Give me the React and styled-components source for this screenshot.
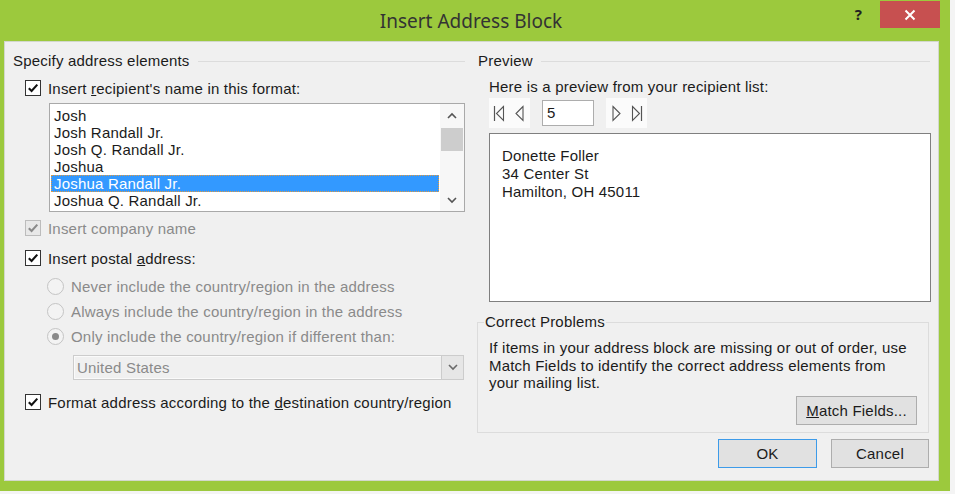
import React from "react";
import styled, { createGlobalStyle } from "styled-components";

const GlobalStyle = createGlobalStyle`
  html, body {
    margin: 0;
    padding: 0;
    background: #f4f4f4;
  }
  body {
    font-family: "Liberation Sans", Arial, sans-serif;
    font-size: 15px;
    letter-spacing: 0.2px;
    color: #1b1b1b;
  }
  * { box-sizing: border-box; }
`;

const names = [
  "Josh",
  "Josh Randall Jr.",
  "Josh Q. Randall Jr.",
  "Joshua",
  "Joshua Randall Jr.",
  "Joshua Q. Randall Jr.",
];

function CheckMark({ color }) {
  return (
    <svg width="12" height="12" viewBox="0 0 12 12">
      <path d="M1.8 6.2 L4.6 9 L10.3 2.6" fill="none" stroke={color} strokeWidth="2.1" />
    </svg>
  );
}

function Chevron({ up, color = "#555" }) {
  return (
    <svg width="10" height="7" viewBox="0 0 10 7">
      <path
        d={up ? "M1 6 L5 2 L9 6" : "M1 1 L5 5 L9 1"}
        fill="none"
        stroke={color}
        strokeWidth="1.6"
      />
    </svg>
  );
}

function App() {
  return (
    <>
      <GlobalStyle />
      <Window>
        <TitleBar>
          <span />
          <Title>Insert Address Block</Title>
          <Controls>
            <Help>?</Help>
            <CloseButton>
              <svg width="12" height="12" viewBox="0 0 12 12">
                <path d="M1.5 1.5 L10.5 10.5 M10.5 1.5 L1.5 10.5" stroke="#fff" strokeWidth="2" />
              </svg>
            </CloseButton>
          </Controls>
        </TitleBar>

        <Client>
          <Columns>
            <Column>
              <GroupHeader>
                <span>Specify address elements</span>
                <Rule />
              </GroupHeader>

              <CheckRow $top={9}>
                <Box><CheckMark color="#111" /></Box>
                <span>Insert <u>r</u>ecipient's name in this format:</span>
              </CheckRow>

              <ListBox>
                <Items>
                  {names.map((n, i) => (
                    <Item key={n} $selected={i === 4}>{n}</Item>
                  ))}
                </Items>
                <ScrollBar>
                  <ScrollArrow><Chevron up /></ScrollArrow>
                  <Track><Thumb /></Track>
                  <ScrollArrow><Chevron /></ScrollArrow>
                </ScrollBar>
              </ListBox>

              <CheckRow $top={7} $disabled>
                <Box $disabled><CheckMark color="#8a8a8a" /></Box>
                <span>Insert company name</span>
              </CheckRow>

              <CheckRow $top={12}>
                <Box><CheckMark color="#111" /></Box>
                <span>Insert postal <u>a</u>ddress:</span>
              </CheckRow>

              <RadioRow $top={10}>
                <Radio />
                <span>Never include the country/region in the address</span>
              </RadioRow>
              <RadioRow $top={7}>
                <Radio />
                <span>Always include the country/region in the address</span>
              </RadioRow>
              <RadioRow $top={7}>
                <Radio $checked />
                <span>Only include the country/region if different than:</span>
              </RadioRow>

              <Select>
                <SelectValue>United States</SelectValue>
                <SelectButton><Chevron color="#6a6a6a" /></SelectButton>
              </Select>

              <CheckRow $top={13}>
                <Box><CheckMark color="#111" /></Box>
                <span>Format address according to the <u>d</u>estination country/region</span>
              </CheckRow>
            </Column>

            <Column>
              <GroupHeader $inset>
                <span>Preview</span>
                <Rule />
              </GroupHeader>

              <Intro>Here is a preview from your recipient list:</Intro>

              <NavRow>
                <NavPair>
                  <NavButton>
                    <svg width="12" height="17" viewBox="0 0 12 17">
                      <path d="M1.5 1 V16" stroke="#555" strokeWidth="1.2" />
                      <path d="M10.5 1.5 L3.5 8.5 L10.5 15.5 Z" fill="none" stroke="#555" strokeWidth="1.1" />
                    </svg>
                  </NavButton>
                  <NavButton>
                    <svg width="9" height="17" viewBox="0 0 9 17">
                      <path d="M8 1.5 L1 8.5 L8 15.5 Z" fill="none" stroke="#555" strokeWidth="1.1" />
                    </svg>
                  </NavButton>
                </NavPair>
                <RecordBox>5</RecordBox>
                <NavPair>
                  <NavButton>
                    <svg width="9" height="17" viewBox="0 0 9 17">
                      <path d="M1 1.5 L8 8.5 L1 15.5 Z" fill="none" stroke="#555" strokeWidth="1.1" />
                    </svg>
                  </NavButton>
                  <NavButton>
                    <svg width="12" height="17" viewBox="0 0 12 17">
                      <path d="M1.5 1.5 L8.5 8.5 L1.5 15.5 Z" fill="none" stroke="#555" strokeWidth="1.1" />
                      <path d="M10.5 1 V16" stroke="#555" strokeWidth="1.2" />
                    </svg>
                  </NavButton>
                </NavPair>
              </NavRow>

              <PreviewBox>
                <div>Donette Foller</div>
                <div>34 Center St</div>
                <div>Hamilton, OH 45011</div>
              </PreviewBox>

              <Problems>
                <Legend>Correct Problems</Legend>
                <Paragraph>
                  If items in your address block are missing or out of order, use
                  <br />
                  Match Fields to identify the correct address elements from
                  <br />
                  your mailing list.
                </Paragraph>
                <MatchRow>
                  <Button $width={121}><u>M</u>atch Fields...</Button>
                </MatchRow>
              </Problems>

              <Footer>
                <Button $width={99} $default>OK</Button>
                <Button $width={98}>Cancel</Button>
              </Footer>
            </Column>
          </Columns>
        </Client>
      </Window>
    </>
  );
}

export default App;

const Window = styled.div`
  width: 950px;
  height: 491px;
  background: #9cc93d;
  display: flex;
  flex-direction: column;
`;

const TitleBar = styled.div`
  height: 41px;
  flex-shrink: 0;
  display: grid;
  grid-template-columns: 1fr auto 1fr;
  align-items: start;
`;

const Title = styled.div`
  padding-top: 8px;
  font-family: "Noto Sans", "Open Sans", sans-serif;
  font-size: 19px;
  letter-spacing: 0;
  color: #333;
  margin-right: 8px;
`;

const Controls = styled.div`
  justify-self: end;
  display: flex;
  align-items: flex-start;
  margin-right: 10px;
  padding-top: 1px;
`;

const Help = styled.div`
  font-family: "Noto Sans", "Open Sans", sans-serif;
  font-weight: 700;
  font-size: 15px;
  color: #222;
  margin: 3px 18px 0 0;
`;

const CloseButton = styled.div`
  width: 60px;
  height: 27px;
  background: #c75050;
  display: flex;
  align-items: center;
  justify-content: center;
`;

const Client = styled.div`
  flex: 1;
  margin: 0 11px 10px 4px;
  background: #f0f0f0;
  border: 1px solid #d2d8cc;
  padding: 10px 7px 0 8px;
`;

const Columns = styled.div`
  display: grid;
  grid-template-columns: 452px 454px;
  column-gap: 12px;
`;

const Column = styled.div`
  display: flex;
  flex-direction: column;
`;

const GroupHeader = styled.div`
  display: flex;
  align-items: center;
  height: 18px;
  line-height: 18px;
  padding: 0 ${(p) => (p.$inset ? "1px" : "0")};
  gap: 8px;
  white-space: nowrap;
`;

const Rule = styled.div`
  flex: 1;
  border-top: 1px solid #dcdcdc;
  margin-top: 1px;
`;

const CheckRow = styled.div`
  display: flex;
  align-items: center;
  gap: 7px;
  height: 18px;
  margin-top: ${(p) => p.$top}px;
  padding-left: 12px;
  color: ${(p) => (p.$disabled ? "#8a8a8a" : "#1b1b1b")};
  white-space: nowrap;
`;

const Box = styled.span`
  width: 16px;
  height: 16px;
  flex-shrink: 0;
  border: 1px solid ${(p) => (p.$disabled ? "#bcbcbc" : "#333")};
  background: ${(p) => (p.$disabled ? "#e8e8e8" : "#fff")};
  display: flex;
  align-items: center;
  justify-content: center;
`;

const ListBox = styled.div`
  margin: 6px 0 0 36px;
  height: 109px;
  border: 1px solid #a9a9a9;
  background: #fff;
  display: flex;
`;

const Items = styled.div`
  flex: 1;
  padding: 3px 1px 0 1px;
`;

const Item = styled.div`
  height: 17px;
  line-height: 15px;
  padding-left: 2px;
  white-space: nowrap;
  border: 1px ${(p) => (p.$selected ? "dotted #e39a3e" : "solid transparent")};
  background: ${(p) => (p.$selected ? "#3399ff" : "transparent")};
  color: ${(p) => (p.$selected ? "#fff" : "#1b1b1b")};
`;

const ScrollBar = styled.div`
  width: 24px;
  background: #f7f7f7;
  display: flex;
  flex-direction: column;
  align-items: center;
  padding: 0 1px;
`;

const ScrollArrow = styled.div`
  height: 22px;
  display: flex;
  align-items: center;
  justify-content: center;
`;

const Track = styled.div`
  flex: 1;
  width: 100%;
`;

const Thumb = styled.div`
  height: 23px;
  margin-top: 2px;
  background: #cdcdcd;
`;

const RadioRow = styled.div`
  display: flex;
  align-items: center;
  gap: 7px;
  height: 18px;
  margin-top: ${(p) => p.$top}px;
  padding-left: 34px;
  color: #8a8a8a;
  white-space: nowrap;
`;

const Radio = styled.span`
  width: 17px;
  height: 17px;
  flex-shrink: 0;
  border-radius: 50%;
  border: 1px solid #c4c4c4;
  background: #f3f3f3;
  display: flex;
  align-items: center;
  justify-content: center;
  &::after {
    content: "";
    width: 7px;
    height: 7px;
    border-radius: 50%;
    background: ${(p) => (p.$checked ? "#8a8a8a" : "transparent")};
  }
`;

const Select = styled.div`
  margin: 10px 1px 0 60px;
  height: 25px;
  border: 1px solid #cccccc;
  background: #f0f0f0;
  display: flex;
  box-shadow: inset 0 0 0 1px #fafafa;
`;

const SelectValue = styled.div`
  flex: 1;
  padding-left: 3px;
  line-height: 23px;
  color: #8a8a8a;
`;

const SelectButton = styled.div`
  width: 22px;
  border-left: 1px solid #cccccc;
  background: #e6e6e6;
  display: flex;
  align-items: center;
  justify-content: center;
`;

const Intro = styled.div`
  margin-top: 8px;
  padding-left: 12px;
  height: 18px;
  line-height: 18px;
`;

const NavRow = styled.div`
  display: flex;
  align-items: center;
  gap: 12px;
  margin-top: 2px;
  padding-left: 12px;
  height: 30px;
`;

const NavPair = styled.div`
  display: flex;
  width: 41px;
  height: 30px;
  background: #fbfbfb;
`;

const NavButton = styled.div`
  flex: 1;
  display: flex;
  align-items: center;
  justify-content: center;
`;

const RecordBox = styled.div`
  width: 52px;
  height: 26px;
  border: 1px solid #adadad;
  background: #fff;
  padding-left: 4px;
  line-height: 24px;
`;

const PreviewBox = styled.div`
  margin: 5px 0 0 12px;
  height: 169px;
  border: 1px solid #7f7f7f;
  background: #fff;
  padding: 13px 12px;
  line-height: 18px;
`;

const Problems = styled.fieldset`
  margin: 11px 2px 0 0;
  padding: 0 11px 7px 6px;
  border: 1px solid #dcdcdc;
  min-width: 0;
`;

const Legend = styled.legend`
  padding: 0 1px;
  line-height: 18px;
`;

const Paragraph = styled.div`
  margin-top: 8px;
  padding-left: 5px;
  line-height: 17.5px;
  white-space: nowrap;
`;

const MatchRow = styled.div`
  display: flex;
  justify-content: flex-end;
  margin-top: 4px;
`;

const Button = styled.div`
  width: ${(p) => p.$width}px;
  height: 29px;
  border: 1px solid ${(p) => (p.$default ? "#3d9be9" : "#adadad")};
  background: #e1e1e1;
  display: flex;
  align-items: center;
  justify-content: center;
`;

const Footer = styled.div`
  display: flex;
  justify-content: flex-end;
  gap: 14px;
  margin: 6px 2px 0 0;
`;
